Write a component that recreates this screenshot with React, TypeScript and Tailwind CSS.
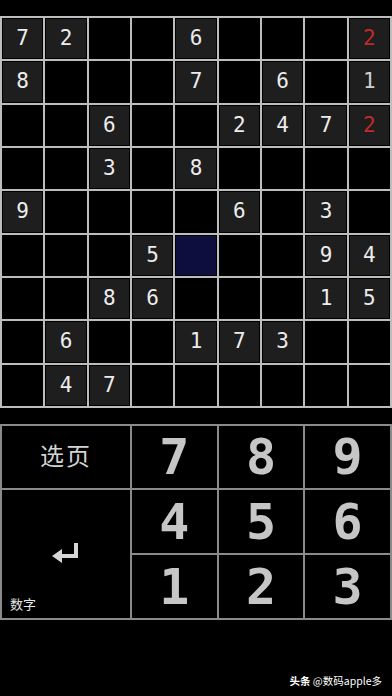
import React from "react";

type Cell = { v: string; c?: "red" | "gray" } | null;

const R = (v: string): Cell => ({ v, c: "red" });
const G = (v: string): Cell => ({ v, c: "gray" });
const N = (v: string): Cell => ({ v });
const _ = null;

const board: Cell[][] = [
  [N("7"), N("2"), _, _, N("6"), _, _, _, R("2")],
  [N("8"), _, _, _, N("7"), _, N("6"), _, G("1")],
  [_, _, N("6"), _, _, N("2"), N("4"), N("7"), R("2")],
  [_, _, N("3"), _, N("8"), _, _, _, _],
  [N("9"), _, _, _, _, N("6"), _, N("3"), _],
  [_, _, _, N("5"), _, _, _, N("9"), N("4")],
  [_, _, N("8"), N("6"), _, _, _, N("1"), N("5")],
  [_, N("6"), _, _, N("1"), N("7"), N("3"), _, _],
  [_, N("4"), N("7"), _, _, _, _, _, _],
];

const mono = { fontFamily: '"DejaVu Sans Mono", "Liberation Mono", monospace' };
const cjk = { fontFamily: '"Noto Sans CJK SC", "Noto Sans", sans-serif' };

function KeyDigit({ d }: { d: string }) {
  return (
    <div className="bg-black flex items-center justify-center">
      <span className="text-[50px] font-bold leading-none text-[#c6c6c6]" style={mono}>
        {d}
      </span>
    </div>
  );
}

export default function App() {
  return (
    <div className="w-[392px] h-[696px] bg-black overflow-hidden flex flex-col">
      <div className="h-[16px]" />
      <div className="w-[392px] h-[392px] bg-[#bdbdbd] p-[2px] grid grid-cols-9 grid-rows-9 gap-[2px]">
        {board.map((row, r) =>
          row.map((cell, c) => {
            const selected = r === 5 && c === 4;
            return (
              <div key={`${r}-${c}`} className="bg-black p-px">
                <div
                  className={`w-full h-full flex items-center justify-center ${
                    selected ? "bg-[#0e0e3e]" : cell ? "bg-[#1e1e1e]" : "bg-black"
                  }`}
                >
                  {cell && (
                    <span
                      className={`text-[21px] leading-none ${
                        cell.c === "red"
                          ? "text-[#c02a2c]"
                          : cell.c === "gray"
                          ? "text-[#cfcfcf] font-light"
                          : "text-[#ececec]"
                      }`}
                      style={mono}
                    >
                      {cell.v}
                    </span>
                  )}
                </div>
              </div>
            );
          })
        )}
      </div>
      <div className="h-[16px]" />
      <div className="w-[392px] bg-[#8a8a8a] p-[2px] grid grid-cols-[128px_1fr_1fr_1fr] grid-rows-[62px_63px_63px] gap-[2px]">
        <div className="bg-black flex items-center justify-center">
          <span className="text-[24px] text-[#d4d4d4] tracking-[2px] -mt-[4px]" style={cjk}>
            选页
          </span>
        </div>
        <KeyDigit d="7" />
        <KeyDigit d="8" />
        <KeyDigit d="9" />
        <div className="bg-black row-span-2 relative flex items-center justify-center">
          <svg width="30" height="22" viewBox="0 0 30 22" className="-ml-[2px] -mt-[3px]">
            <path d="M26 1 V14 H10" stroke="#d6d6d6" strokeWidth="4" fill="none" />
            <path d="M2 14 L12 7 V21 Z" fill="#d6d6d6" />
          </svg>
          <span className="absolute left-[8px] bottom-[5px] text-[13px] text-[#e6e6e6]" style={cjk}>
            数字
          </span>
        </div>
        <KeyDigit d="4" />
        <KeyDigit d="5" />
        <KeyDigit d="6" />
        <KeyDigit d="1" />
        <KeyDigit d="2" />
        <KeyDigit d="3" />
      </div>
      <div className="flex-1 flex items-end justify-end pr-[10px] pb-[7px]">
        <span className="text-[10.5px] text-white" style={cjk}>
          <span className="font-bold">头条</span> @数码apple多
        </span>
      </div>
    </div>
  );
}
